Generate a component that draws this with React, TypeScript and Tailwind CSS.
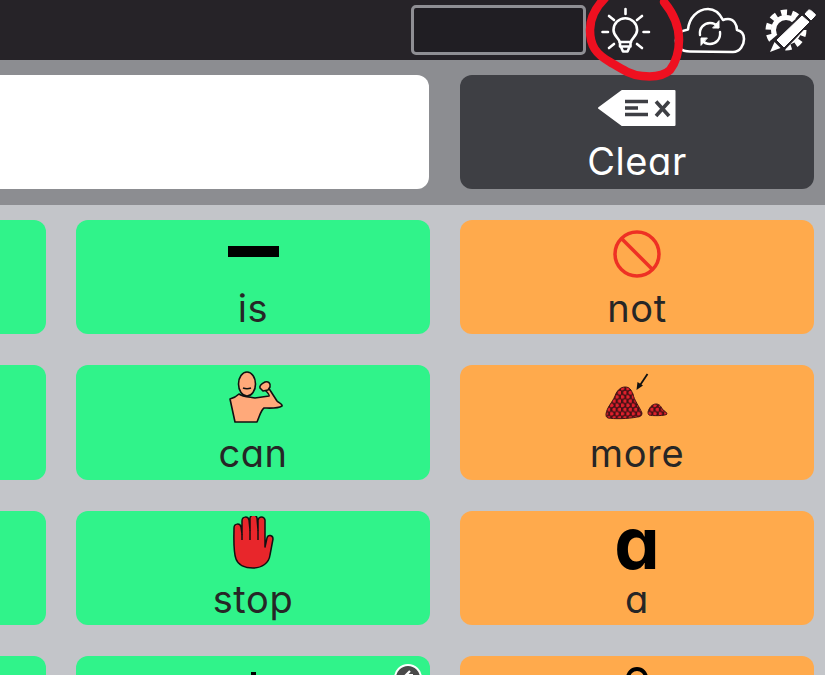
import React from 'react';

const Bulb = () => (
  <svg viewBox="598 0 56 52" className="w-[56px] h-[52px]" fill="none" stroke="white" strokeWidth="2.600" strokeLinecap="round" strokeLinejoin="round">
    <path d="M619.500 38c0-4-6-5.500-6-12a11.800 11.800 0 0 1 23.600 0c0 6.500-6 8-6 12z" />
    <path d="M620 38.500v4h10.500v-4M621 43l2 4.500h4.500l2-4.500" />
    <path d="M625.500 5v5M602.500 28h5.500M643.500 28h5.500M609 12l5 4M642 12l-5 4M609 44l5-4M642 44l-5-4" />
  </svg>
);

const CloudSync = () => (
  <svg viewBox="672 2 76 50" className="w-[76px] h-[50px]" fill="none" stroke="white" strokeLinecap="round" strokeLinejoin="round">
    <path strokeWidth="2.600" d="M690 48.500c-9 0-14-5-14-11 0-6 5-10 12-11 1-11 9-20.500 20-20.500 7 0 12 5 15 11 2-1 3-1 5-1 6 0 9 6 9 11 5 1 7 5 7 9 0 6-4 13-11 13z" />
    <path strokeWidth="2.400" d="M700 32c-1-7 4-12 10-12 3 0 6 1 8 4M720 29c1 7-4 12-10 12-3 0-6-1-8-4" />
    <path fill="white" strokeWidth="1" d="M719 18v7h-6zM701 42v-7h6z" />
  </svg>
);

const GearPencil = () => (
  <svg viewBox="764 4 54 50" className="w-[54px] h-[50px]" fill="none">
    <circle cx="786" cy="29" r="12.500" stroke="white" strokeWidth="5" />
    <circle cx="786" cy="29" r="17.500" stroke="white" strokeWidth="6" strokeDasharray="6 5" />
    <path fill="#262328" d="M812 4l6 10-38 40-14-2 4-12z" />
    <path fill="white" stroke="white" strokeLinejoin="round" d="M808 9.500c2-2 5 2 7 3.500 1 1 0 2-1 3l-3 3-6-6zM802 15l7 6-25 25-7-7z" />
    <path fill="white" d="M774.500 41l6 6-10.500 4z" />
  </svg>
);

const ClearIcon = () => (
  <svg viewBox="596 85 82 40" className="w-[82px] h-[40px]">
    <path fill="white" stroke="white" strokeWidth="2" strokeLinejoin="round" d="M599 105l23-17h52.500v34h-52.500z" />
    <path fill="none" stroke="#3e3f44" strokeWidth="3.600" d="M625 98.500h23M625 105h13M625 111.500h23M656 98.500l13 14.500M669 98.500l-13 14.500" />
  </svg>
);

const NotIcon = () => (
  <svg viewBox="0 0 50 50" className="w-[50px] h-[50px]" fill="none" stroke="#ee3124" strokeWidth="3.500">
    <circle cx="25" cy="25" r="22" />
    <path d="M9 9l32 32" />
  </svg>
);

const ManIcon = () => (
  <svg viewBox="219 371 68 56" className="w-[68px] h-[56px]" stroke="#111" strokeWidth="1.600" strokeLinejoin="round" fill="#ffa97a">
    <path d="M235 422l-5-23c4-1 7-3 9-5 4 3 12 3 16 4l14-2c1-1-2-4-4-6l3-3 9 14c2 2 6 3 5 5-5 3-14 2-18 2-3 2-4 7-7 14z" />
    <path d="M260 388c-1-3 3-5 5-6 3-1 6 1 5 5l-2 3-5 1z" />
    <ellipse cx="247" cy="384" rx="8.500" ry="12" />
    <path d="M243 388q4 1.500 8 0" fill="none" />
  </svg>
);

const MoreIcon = () => (
  <svg viewBox="601 372 72 54" className="w-[72px] h-[54px]">
    <defs>
      <pattern id="berries" width="5.400" height="8.400" patternUnits="userSpaceOnUse">
        <rect width="5.400" height="8.400" fill="#451114" />
        <circle cx="1.350" cy="2.100" r="1.950" fill="#e0202c" />
        <circle cx="4.050" cy="6.300" r="1.950" fill="#e0202c" />
      </pattern>
    </defs>
    <path fill="url(#berries)" stroke="#451114" strokeWidth="1" d="M606 414c1-7 6-11 9-18 2-6 6-9 10-9 5 0 6 3 8 7 1 6 6 12 9 19 0 3-2 4-5 4-9 2-24 2-29 1-2-1-2-2-2-4z" />
    <path fill="url(#berries)" stroke="#451114" strokeWidth="1" d="M648 412c1-4 4-8 8-8 4 0 5 3 7 6 2 1 4 3 4 4-1 2-16 2-18 1-1-1-1-2-1-3z" />
    <path stroke="#111" strokeWidth="1.800" d="M647.500 374l-8 12" />
    <path fill="#111" d="M636.500 390l1-8 5.500 3.500z" />
  </svg>
);

const HandIcon = () => (
  <svg viewBox="230 516 46 58" className="w-[46px] h-[58px]" fill="#e8262b" stroke="#111" strokeWidth="1.500" strokeLinejoin="round">
    <path d="M236 559c-3-8-2-22-2-31 0-5 6-5 7-1l1 7 0-13c0-5 6-5 7-1l1 10v-12c1-4 6-4 7 0l1 12 0-10c1-4 6-4 7 0l0 27 2-9c1-4 6-3 6 1l-3 16c-1 8-8 13-17 13-8 0-15-3-17-9z" />
    <path d="M242 534v6M250 530v10M258 530v10" fill="none" />
  </svg>
);

type CellProps = {
  color: 'green' | 'orange';
  label?: string;
  icon?: React.ReactNode;
  badge?: boolean;
  cut?: boolean;
};

const Cell = ({ color, label, icon, badge, cut }: CellProps) => (
  <div className={`relative h-[114.330px] flex flex-col items-center ${cut ? 'rounded-r-xl' : 'rounded-xl'} ${color === 'green' ? 'bg-[#30f38a]' : 'bg-[#ffaa4c]'}`}>
    <div className="h-[68px] w-full flex items-center justify-center">{icon}</div>
    {label && <span className="text-[38px] leading-[40px] tracking-[0.6px] text-[#262626] [font-feature-settings:'cv11']">{label}</span>}
    {badge && (
      <div className="absolute right-[8px] top-[8px] w-[28px] h-[28px] rounded-full bg-[#4a4a4a] border-2 border-white flex items-start justify-center pt-[3px]">
        <svg viewBox="0 0 12 12" className="w-[12px] h-[12px]" fill="none" stroke="white" strokeWidth="2.200">
          <path d="M8 2L4 6h7M4 6l3 4" />
        </svg>
      </div>
    )}
  </div>
);

export default function App() {
  return (
    <div className="w-[825px] h-[675px] overflow-hidden flex flex-col bg-[#c3c5c9] font-['Inter',sans-serif] relative">
      <div className="h-[60px] shrink-0 bg-[#262328] flex items-center pl-[411px]">
        <div className="w-[175px] h-[50px] rounded-[5px] border-[3px] border-[#8f8f94] bg-[#201e23]" />
        <div className="ml-[12px]"><Bulb /></div>
        <div className="ml-[18px]"><CloudSync /></div>
        <div className="ml-[16px]"><GearPencil /></div>
      </div>

      <div className="h-[145px] shrink-0 bg-[#8c8d91] pt-[15px] flex">
        <div className="w-[429px] h-[114px] rounded-r-xl bg-white" />
        <div className="ml-[31px] w-[354px] h-[114px] rounded-xl bg-[#3e3f44] flex flex-col items-center text-white">
          <div className="h-[66px] flex items-center justify-center"><ClearIcon /></div>
          <span className="text-[38px] leading-[40px] tracking-[0.6px] [font-feature-settings:'cv11']">Clear</span>
        </div>
      </div>

      <div className="grid grid-cols-[46px_354px_354px] gap-x-[30px] gap-y-[31px] pt-[15px]">
        <Cell color="green" cut />
        <Cell color="green" label="is" icon={<div className="w-[51px] h-[11px] mb-[6px] bg-black" />} />
        <Cell color="orange" label="not" icon={<NotIcon />} />

        <Cell color="green" cut />
        <Cell color="green" label="can" icon={<ManIcon />} />
        <Cell color="orange" label="more" icon={<MoreIcon />} />

        <Cell color="green" cut />
        <Cell color="green" label="stop" icon={<HandIcon />} />
        <Cell color="orange" label="a" icon={<span className="text-[72px] leading-[60px] mb-[4px] font-bold text-black [font-feature-settings:'cv11']">a</span>} />

        <Cell color="green" cut />
        <Cell color="green" badge icon={<div className="w-[5px] h-[40px] mt-[4px] bg-black" />} />
        <Cell color="orange" icon={<div className="w-[22px] h-[22px] mb-[24px] rounded-full border-[4px] border-black" />} />
      </div>

      <svg viewBox="0 0 825 675" className="absolute inset-0 w-[825px] h-[675px] pointer-events-none" fill="none">
        <path stroke="#ee1020" strokeWidth="8.500" strokeLinecap="round" d="M605 -2c-8 8-15 18-15 32 0 16 6 24 20 32 10 6 20 13 32 14 10 1 22 0 28-6 6-8 9-18 9-30 0-14-5-26-15-38" />
      </svg>
    </div>
  );
}
